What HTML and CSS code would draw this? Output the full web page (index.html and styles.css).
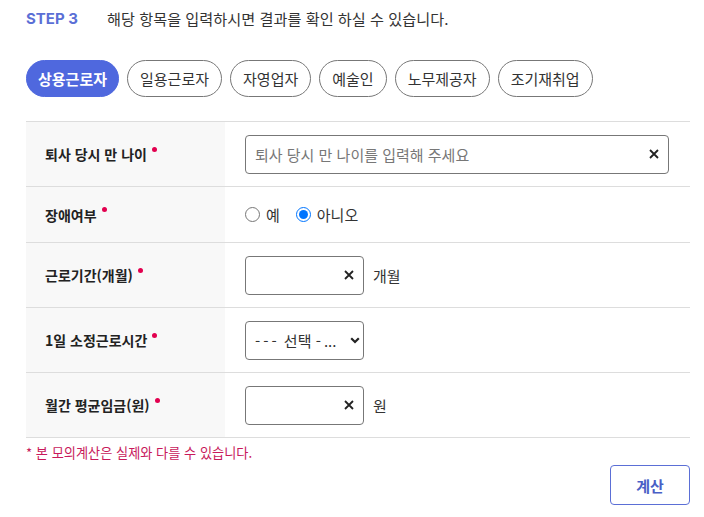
FILE: index.html
```html
<!DOCTYPE html>
<html lang="ko">
<head>
<meta charset="utf-8">
<link rel="stylesheet" href="styles.css">
</head>
<body>
<div class="page">
  <div class="step">
    <span class="step-no">STEP 3</span>
    <span class="step-text">해당 항목을 입력하시면 결과를 확인 하실 수 있습니다.</span>
  </div>
  <div class="tabs">
    <button class="tab active">상용근로자</button>
    <button class="tab">일용근로자</button>
    <button class="tab">자영업자</button>
    <button class="tab">예술인</button>
    <button class="tab">노무제공자</button>
    <button class="tab">조기재취업</button>
  </div>
  <div class="form">
    <div class="row tall">
      <div class="label">퇴사 당시 만 나이<span class="req"></span></div>
      <div class="field">
        <div class="input wide"><input type="text" placeholder="퇴사 당시 만 나이를 입력해 주세요"><svg class="clear" width="10" height="10" viewBox="0 0 10 10"><path d="M1 1 L9 9 M9 1 L1 9" stroke="#222" stroke-width="1.8"/></svg></div>
      </div>
    </div>
    <div class="row short">
      <div class="label">장애여부<span class="req"></span></div>
      <div class="field radios">
        <label class="radio"><input type="radio" name="d"> 예</label>
        <label class="radio"><input type="radio" name="d" checked> 아니오</label>
      </div>
    </div>
    <div class="row tall">
      <div class="label">근로기간(개월)<span class="req"></span></div>
      <div class="field">
        <div class="input small"><input type="text"><svg class="clear" width="10" height="10" viewBox="0 0 10 10"><path d="M1 1 L9 9 M9 1 L1 9" stroke="#222" stroke-width="1.8"/></svg></div>
        <span class="unit">개월</span>
      </div>
    </div>
    <div class="row tall">
      <div class="label">1일 소정근로시간<span class="req"></span></div>
      <div class="field">
        <div class="select">
          <span><span class="dash">---</span> 선택 <span class="dash">-</span>...</span>
          <svg width="10" height="7" viewBox="0 0 10 7"><path d="M1.2 1.2 L5 5 L8.8 1.2" fill="none" stroke="#222" stroke-width="2.2"/></svg>
        </div>
      </div>
    </div>
    <div class="row tall">
      <div class="label">월간 평균임금(원)<span class="req"></span></div>
      <div class="field">
        <div class="input small"><input type="text"><svg class="clear" width="10" height="10" viewBox="0 0 10 10"><path d="M1 1 L9 9 M9 1 L1 9" stroke="#222" stroke-width="1.8"/></svg></div>
        <span class="unit">원</span>
      </div>
    </div>
  </div>
  <p class="note">* 본 모의계산은 실제와 다를 수 있습니다.</p>
  <div class="actions">
    <button class="calc">계산</button>
  </div>
</div>
</body>
</html>
```
FILE: styles.css
```css
* { box-sizing: border-box; }
html, body { margin: 0; background: #fff; }
body {
  font-family: "Noto Sans CJK KR", "Noto Sans", sans-serif;
  color: #222;
}
.page { padding: 7px 14px 0 26px; width: 704px; }
.step { display: flex; align-items: center; height: 22px; font-size: 15px; }
.step-no { color: #5b6fd6; font-weight: 700; font-family: "Inter", "Noto Sans CJK KR", sans-serif; font-size: 15px; width: 81px; }
.step-text { color: #333; font-size: 15.2px; }
.tabs { display: flex; gap: 8px; margin-top: 31px; }
.tab {
  height: 37px; padding: 0 12px; border: 1px solid #777; border-radius: 19px;
  background: #fff; font: inherit; font-size: 15px; color: #333;
  display: flex; align-items: center;
}
.tab.active { background: #4f68de; border-color: #4f68de; color: #fff; font-weight: 700; padding: 0 11px; }
.form { margin-top: 24px; border-top: 1px solid #ddd; width: 664px; }
.row { display: flex; border-bottom: 1px solid #ddd; }
.row.tall { height: 65px; }
.row.short { height: 56px; }
.label {
  width: 199px; background: #f8f8f8; padding: 0 0 0 19px;
  display: flex; align-items: center; font-size: 14px; font-weight: 700; color: #222;
}
.req { width: 5px; height: 5px; border-radius: 50%; background: #e2004f; margin: -10px 0 0 5px; }
.field { flex: 1; display: flex; align-items: center; padding-left: 20px; gap: 9px; }
.input {
  height: 39px; border: 1px solid #777; border-radius: 4px; display: flex; align-items: center;
  padding: 0 9px 0 9px;
}
.input.wide { width: 424px; }
.input.small { width: 119px; }
.input input {
  flex: 1; min-width: 0; border: 0; outline: 0; font: inherit; font-size: 15px; padding: 0; background: transparent;
}
.input input::placeholder { color: #777; }
.clear { flex: none; }
.unit { font-size: 15px; color: #333; }
.radios { gap: 16px; }
.radio { display: flex; align-items: center; font-size: 15px; color: #333; }
.radio input { margin: 0 6px 0 0; width: 15px; height: 15px; accent-color: #0075ff; }
.select {
  width: 119px; height: 39px; border: 1px solid #777; border-radius: 4px;
  display: flex; align-items: center; justify-content: space-between; padding: 0 3px 0 9px;
  font-size: 15px; color: #333;
}
.dash { letter-spacing: 3px; }
.note { margin: 5px 0 0 0; font-size: 13.2px; color: #c8195b; }
.actions { display: flex; justify-content: flex-end; width: 664px; margin-top: 3px; }
.calc {
  width: 80px; height: 40px; border: 1px solid #5b6fd6; border-radius: 4px; background: #fff;
  color: #4a5fc6; font: inherit; font-size: 15px; font-weight: 700;
}
```
